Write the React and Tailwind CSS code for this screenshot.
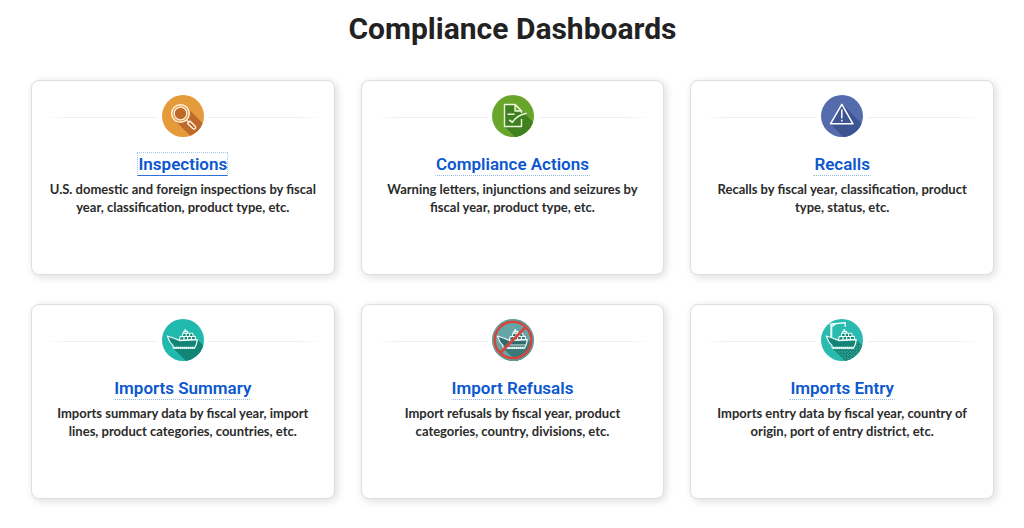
import React from "react";

function Disc({ id, color, children }) {
  return (
    <svg viewBox="0 0 42 42" className="size-[42px] shrink-0" aria-hidden="true">
      <defs>
        <clipPath id={id}>
          <circle cx="21" cy="21" r="21" />
        </clipPath>
      </defs>
      <circle cx="21" cy="21" r="21" fill={color} />
      <g clipPath={`url(#${id})`}>{children}</g>
    </svg>
  );
}

function InspectionsIcon() {
  return (
    <Disc id="disc-inspections" color="#e59a3c">
      <path d="M12.5 25 25 12.5 46 33.5V46H33.5Z" fill="#bd6a2a" />
      <circle cx="18.5" cy="18.5" r="7.6" fill="#bd6a2a" stroke="#e59a3c" strokeWidth="2.6" />
      <circle cx="18.5" cy="18.5" r="8.8" fill="none" stroke="#fff3df" strokeWidth="1.4" />
      <circle cx="18.5" cy="18.5" r="6.3" fill="none" stroke="#fff3df" strokeWidth="1.2" />
      <path
        d="M24.8 25.2 26.4 27 M25.6 28.4 28 26 33.2 31.2A1.7 1.7 0 0 1 30.8 33.6Z"
        fill="#bd6a2a"
        stroke="#fff3df"
        strokeWidth="1.4"
        strokeLinejoin="round"
      />
    </Disc>
  );
}

function ActionsIcon() {
  return (
    <Disc id="disc-actions" color="#69a52b">
      <path d="M12.5 31.5 29 15 46 32V46H27Z" fill="#40801f" />
      <path d="M12.5 9.5H23L29 15.5V31.5H12.5Z" fill="#40801f" />
      <g fill="none" stroke="#eef8dc" strokeWidth="1.4" strokeLinejoin="round">
        <path d="M29.5 24V31.5H12.5V9.5H23L29.5 16V18" />
        <path d="M23 9.5V16H29.5Z" fill="#69a52b" />
        <path d="M15.5 19.3H22.5" />
        <path d="M17.3 24.8 20.3 27.3C23 23.2 27.5 19.5 34.5 18.2" strokeWidth="1.6" />
      </g>
    </Disc>
  );
}

function RecallsIcon() {
  return (
    <Disc id="disc-recalls" color="#546bac">
      <path d="M9.5 28.8 21 9 48 36V48H28Z" fill="#3c5492" />
      <path
        d="M20.8 9.3 32 28.8H9.5Z"
        fill="#3c5492"
        stroke="#fff"
        strokeWidth="1.5"
        strokeLinejoin="round"
      />
      <path d="M20.8 14.5V23.3M20.8 24.8V26.5" stroke="#fff" strokeWidth="1.5" />
    </Disc>
  );
}

function Ship({ hull, line }) {
  return (
    <g stroke={line} strokeLinejoin="round">
      <path
        d="M5.3 17 12 19.3 18 21.6 35.3 20.6Q34.8 25.5 32.6 29.2H11.5Q10.8 27.6 11 26.4 7.2 23.2 6.4 19.4Z"
        fill={hull}
        strokeWidth="1.2"
      />
      <path d="M12 28.6H32.5" fill="none" strokeWidth="1.6" strokeDasharray="1.6 .4" />
      <path
        d="M17.4 21.2 18.2 17.6H20.2L20.8 14.2H30.6L31.2 17.4H33.2L33.6 20.4Z"
        fill={hull}
        strokeWidth="1.1"
      />
      <path
        d="M19.8 17.5H32M24.2 14.2V17.5M27.6 14.2V17.5M22 17.5V21M25.6 17.5V21M29.4 17.5V21"
        fill="none"
        strokeWidth="1.2"
      />
      <path d="M21.8 14.2V12.4H25.6V14.4M23.2 12.4V10" fill="none" strokeWidth="1.3" />
    </g>
  );
}

function SummaryIcon() {
  return (
    <Disc id="disc-summary" color="#21b8ae">
      <path d="M11 29 35 20 48 33V48H30Z" fill="#148477" />
      <Ship hull="#148477" line="#effffb" />
    </Disc>
  );
}

function RefusalsIcon() {
  return (
    <Disc id="disc-refusals" color="#65a5a6">
      <path d="M11 29 35 20 48 33V48H30Z" fill="#3d7778" />
      <Ship hull="#326b6c" line="#f2fffc" />
      <path d="M17 26H34" stroke="#d7ebe8" strokeWidth="1.2" />
      <circle cx="21" cy="21" r="18.3" fill="none" stroke="#d6453c" strokeWidth="2.6" />
      <path d="M33.9 8.1 8.1 33.9" stroke="#d6453c" strokeWidth="2.8" />
      <circle cx="21" cy="21" r="20.3" fill="none" stroke="#6b9595" strokeWidth="1.4" />
    </Disc>
  );
}

function EntryIcon() {
  return (
    <Disc id="disc-entry" color="#2abbb0">
      <defs>
        <pattern id="water-dots" width="3" height="3" patternUnits="userSpaceOnUse">
          <circle cx=".8" cy=".8" r=".45" fill="#7fd8cd" />
          <circle cx="2.3" cy="2.3" r=".45" fill="#7fd8cd" />
        </pattern>
      </defs>
      <path d="M11 29 35 20 48 33V48H30Z" fill="#148477" />
      <path d="M11 29 35 20 48 33V48H30Z" fill="url(#water-dots)" />
      <g fill="none" stroke="#effffb">
        <path d="M10.3 18.5V5.5" strokeWidth="2" />
        <path d="M8.5 5.2 24.2 3.8V8M11 7.5 15 4.8" strokeWidth="1.3" />
      </g>
      <Ship hull="#148477" line="#effffb" />
    </Disc>
  );
}

const dashboards = [
  {
    title: "Inspections",
    text: "U.S. domestic and foreign inspections by fiscal year, classification, product type, etc.",
    Icon: InspectionsIcon,
    active: true,
  },
  {
    title: "Compliance Actions",
    text: "Warning letters, injunctions and seizures by fiscal year, product type, etc.",
    Icon: ActionsIcon,
  },
  {
    title: "Recalls",
    text: "Recalls by fiscal year, classification, product type, status, etc.",
    Icon: RecallsIcon,
  },
  {
    title: "Imports Summary",
    text: "Imports summary data by fiscal year, import lines, product categories, countries, etc.",
    Icon: SummaryIcon,
  },
  {
    title: "Import Refusals",
    text: "Import refusals by fiscal year, product categories, country, divisions, etc.",
    Icon: RefusalsIcon,
  },
  {
    title: "Imports Entry",
    text: "Imports entry data by fiscal year, country of origin, port of entry district, etc.",
    Icon: EntryIcon,
  },
];

function Card({ title, text, Icon, active }) {
  return (
    <article className="flex min-h-[195px] flex-col items-center rounded-lg border border-[#dedede] bg-white px-3 pt-[14px] pb-6 text-center shadow-[2px_2px_8px_rgba(0,0,0,0.14)]">
      <div className="flex w-full items-center gap-1">
        <span className="mt-0.5 h-px flex-1 bg-linear-to-r from-white via-[#f0f0f0] via-20% to-[#f0f0f0]" />
        <Icon />
        <span className="mt-0.5 h-px flex-1 bg-linear-to-l from-white via-[#f0f0f0] via-20% to-[#f0f0f0]" />
      </div>
      <h2 className="mt-[15px] font-['Roboto',sans-serif] text-[17px] leading-[22px] font-semibold text-[#0b57d0]">
        <a
          href="#"
          className={
            active
              ? "block border border-dotted border-[#9fc4ee] border-b-[#2f6fd8] [border-bottom-style:solid]"
              : "block border border-transparent border-b-[#8db8ee] [border-bottom-style:dotted]"
          }
        >
          {title}
        </a>
      </h2>
      <p className="mt-1 font-['Lato',sans-serif] text-[13px] leading-[18px] font-bold text-[#2b2b2b]">
        {text}
      </p>
    </article>
  );
}

export default function App() {
  return (
    <main className="bg-white pt-2 pr-[30px] pb-7 pl-[31px]">
      <h1 className="text-center font-['Roboto',sans-serif] text-[30px] leading-[42px] font-bold text-[#222]">
        Compliance Dashboards
      </h1>
      <section className="mt-[30px] grid grid-cols-3 gap-x-[26px] gap-y-[29px]">
        {dashboards.map((item) => (
          <Card key={item.title} {...item} />
        ))}
      </section>
    </main>
  );
}
